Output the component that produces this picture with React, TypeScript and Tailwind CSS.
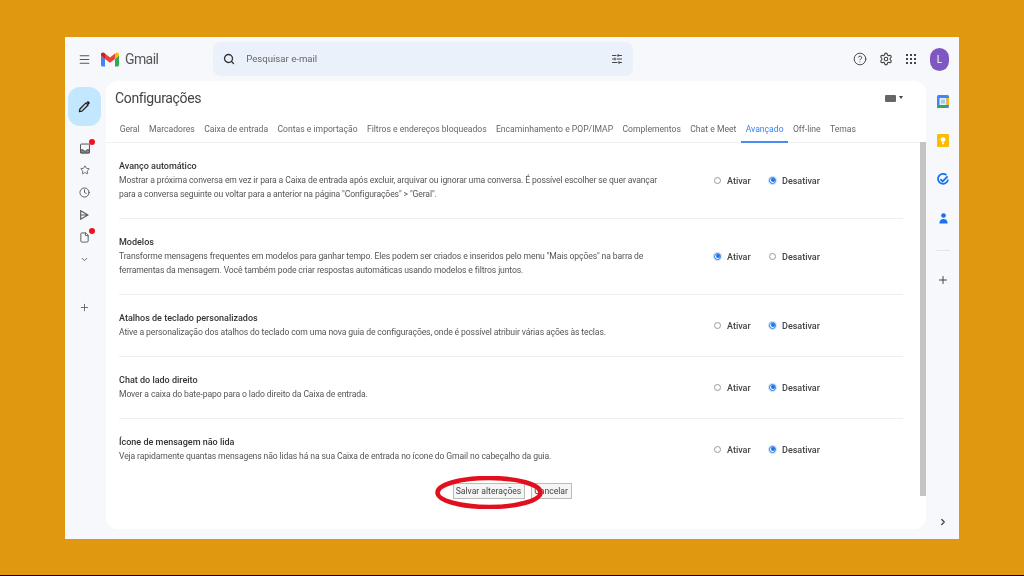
import { ChevronDown, ChevronRight, CircleHelp, Clock, File, Menu, Plus, Search, Settings, SlidersHorizontal, Star } from 'lucide-react';

const tabs = ['Geral', 'Marcadores', 'Caixa de entrada', 'Contas e importação', 'Filtros e endereços bloqueados', 'Encaminhamento e POP/IMAP', 'Complementos', 'Chat e Meet', 'Avançado', 'Off-line', 'Temas'];

const rows = [
    {
        title: 'Avanço automático',
        lines: ['Mostrar a próxima conversa em vez ir para a Caixa de entrada após excluir, arquivar ou ignorar uma conversa. É possível escolher se quer avançar', 'para a conversa seguinte ou voltar para a anterior na página "Configurações" > "Geral".'],
        on: false
    },
    {
        title: 'Modelos',
        lines: ['Transforme mensagens frequentes em modelos para ganhar tempo. Eles podem ser criados e inseridos pelo menu "Mais opções" na barra de', 'ferramentas da mensagem. Você também pode criar respostas automáticas usando modelos e filtros juntos.'],
        on: true
    },
    {
        title: 'Atalhos de teclado personalizados',
        lines: ['Ative a personalização dos atalhos do teclado com uma nova guia de configurações, onde é possível atribuir várias ações às teclas.'],
        on: false
    },
    {
        title: 'Chat do lado direito',
        lines: ['Mover a caixa do bate-papo para o lado direito da Caixa de entrada.'],
        on: false
    },
    {
        title: 'Ícone de mensagem não lida',
        lines: ['Veja rapidamente quantas mensagens não lidas há na sua Caixa de entrada no ícone do Gmail no cabeçalho da guia.'],
        on: false
    }
];

function Radio({ checked, label, width }: { checked: boolean; label: string; width: string }) {
    return (
        <div className={`flex items-center ${width}`}>
            {checked ? (
                <span className="flex h-[7px] w-[7px] items-center justify-center rounded-full border border-[#1a73e8] ring-1 ring-[#cfe0fa]">
                    <span className="h-[4px] w-[4px] rounded-full bg-[#1a73e8]" />
                </span>
            ) : (
                <span className="h-[7px] w-[7px] rounded-full border border-[#999]" />
            )}
            <span className="ml-[6px] mt-[2px] text-[9px] font-medium leading-[13px] text-[#444]">{label}</span>
        </div>
    );
}

function GmailLogo() {
    return (
        <svg width="18" height="15" viewBox="0 0 18 14">
            <path d="M0 3v9.5C0 13.3.7 14 1.5 14H4V6.5z" fill="#4285f4" />
            <path d="M14 14h2.5c.8 0 1.5-.7 1.5-1.5V3l-4 3.5z" fill="#34a853" />
            <path d="M14 1v5.5L18 3V1.8C18 .3 16.2-.6 15 .3z" fill="#fbbc04" />
            <path d="M4 6.5V1l5 4 5-4v5.5L9 10.3z" fill="#ea4335" />
            <path d="M0 1.8V3l4 3.5V1L3 .3C1.8-.6 0 .3 0 1.8z" fill="#c5221f" />
        </svg>
    );
}

function SideIcons() {
    return (
        <div className="flex w-[33px] flex-col items-center text-[#555]">
            <div className="relative mt-[11px] flex h-[22px] items-center">
                <svg width="10" height="11" viewBox="0 0 11 11" fill="none" stroke="#555" strokeWidth="1.1">
                    <rect x="0.6" y="0.6" width="9.8" height="9.8" rx="1" />
                    <path d="M0.6 7h3c0 2 3.8 2 3.8 0h3v3.4h-9.8z" fill="#888" />
                </svg>
                <span className="absolute right-[-5px] top-[2px] h-[6px] w-[6px] rounded-full bg-[#f01020]" />
            </div>
            <div className="flex h-[22px] items-center"><Star size={10} strokeWidth={2} /></div>
            <div className="flex h-[22px] items-center"><Clock size={11} strokeWidth={2} /></div>
            <div className="flex h-[23px] items-center">
                <svg width="9" height="10" viewBox="0 0 9 10" fill="none" stroke="#555" strokeWidth="1.1">
                    <path d="M0.7 0.8L8 5 0.7 9.2zM0.7 5H8" />
                </svg>
            </div>
            <div className="relative flex h-[22px] items-center">
                <File size={11} strokeWidth={2} />
                <span className="absolute right-[-5px] top-[2px] h-[6px] w-[6px] rounded-full bg-[#f01020]" />
            </div>
            <div className="flex h-[22px] items-center"><ChevronDown size={9} strokeWidth={2.4} /></div>
            <div className="mt-[26px] flex h-[22px] items-center"><Plus size={11} strokeWidth={1.8} /></div>
        </div>
    );
}

function RightRail() {
    return (
        <div className="flex w-[33px] flex-col items-center pl-[1px]">
            <svg className="mt-[14px]" width="12" height="13" viewBox="0 0 12 13">
                <rect width="12" height="13" rx="1.5" fill="#4285f4" />
                <rect x="2.5" y="3" width="7" height="7" fill="#e8f0fe" />
                <rect x="9.5" y="3" width="2.5" height="7" fill="#fbbc04" />
                <rect x="0" y="10" width="9.5" height="3" fill="#34a853" />
                <rect x="4" y="4.5" width="4" height="4" fill="#a8c7fa" />
            </svg>
            <svg className="mt-[26px]" width="12" height="13" viewBox="0 0 12 13">
                <rect width="12" height="13" rx="1" fill="#fbbc04" />
                <circle cx="6" cy="5.6" r="2.4" fill="#fff" />
                <rect x="5" y="8.4" width="2" height="1.8" fill="#fff" />
            </svg>
            <svg className="mt-[26px]" width="12" height="13" viewBox="0 0 12 13" fill="none">
                <path d="M9.5 2.2A5 5 0 1 0 11 6.5" stroke="#1a73e8" strokeWidth="1.8" />
                <path d="M3.4 6.2l2.2 2.2 5-5" stroke="#1a73e8" strokeWidth="1.8" />
            </svg>
            <svg className="mt-[26px]" width="9" height="13" viewBox="0 0 10 13">
                <circle cx="5" cy="3.2" r="2.6" fill="#1a73e8" />
                <path d="M0.4 12c0-3.6 2-5 4.6-5s4.6 1.4 4.6 5z" fill="#1a73e8" />
            </svg>
            <div className="mt-[25px] h-px w-[14px] bg-[#e3e5ea]" />
            <Plus className="mt-[23px]" size={12} strokeWidth={2} color="#444" />
            <div className="flex-1" />
            <ChevronRight className="mb-[12px]" size={10} strokeWidth={3} color="#444" />
        </div>
    );
}

export default function App() {
    return (
        <div className="flex h-[576px] w-[1024px] flex-col overflow-hidden bg-[#e09810] font-['Roboto',sans-serif]">
            <div className="min-h-0 flex-1 px-[65px] pb-[36px] pt-[37px]">
                <div className="flex h-full flex-col bg-[#f6f8fc] blur-[0.35px]">
                    <header className="flex h-[44px] items-center">
                        <Menu className="ml-[13px] text-[#555]" size={13} strokeWidth={2} />
                        <div className="ml-[10px]"><GmailLogo /></div>
                        <span className="ml-[6px] text-[14px] tracking-[-0.6px] text-[#555]">Gmail</span>
                        <div className="ml-[55px] flex h-[34px] w-[420px] items-center rounded-[8px] bg-[#eaf1fb] pl-[10px] pr-[10px]">
                            <Search size={12} strokeWidth={2.6} color="#333" />
                            <span className="ml-[11px] flex-1 text-[9.6px] text-[#666]">Pesquisar e-mail</span>
                            <SlidersHorizontal size={12} strokeWidth={2} color="#444" />
                        </div>
                        <div className="flex-1" />
                        <CircleHelp size={14} strokeWidth={1.6} color="#444" />
                        <Settings className="ml-[12px]" size={14} strokeWidth={1.9} color="#444" />
                        <div className="ml-[13px] grid grid-cols-3 gap-[2px]">
                            {[0, 1, 2, 3, 4, 5, 6, 7, 8].map((i) => (
                                <span key={i} className="h-[2px] w-[2px] bg-[#444]" />
                            ))}
                        </div>
                        <div className="ml-[14px] mr-[10px] flex h-[23px] w-[19px] items-center justify-center rounded-full bg-[#7e57c2] text-[10px] text-white">L</div>
                    </header>

                    <div className="flex min-h-0 flex-1">
                        <div className="w-[41px] pl-[3px] pt-[6px]">
                            <div className="flex h-[39px] w-[33px] items-center justify-center rounded-[12px] bg-[#c2e7ff]">
                                <svg width="13" height="13" viewBox="0 0 13 13" fill="none">
                                    <path d="M1.4 11.6l.5-2.6L8 2.9l2.1 2.1L4 11.1z" stroke="#222" strokeWidth="1.3" strokeLinejoin="round" />
                                    <path d="M8.6 2.3l.7-.7a1 1 0 0 1 1.4 0l.7.7a1 1 0 0 1 0 1.4l-.7.7z" fill="#111" />
                                </svg>
                            </div>
                            <SideIcons />
                        </div>

                        <main className="mb-[10px] flex w-[820px] flex-col rounded-[12px] bg-white">
                            <div className="flex h-[35px] items-start justify-between pl-[9px] pr-[23px] pt-[6px]">
                                <span className="text-[14px] leading-[22px] tracking-[-0.35px] text-[#444]">Configurações</span>
                                <div className="mt-[8px] flex items-center gap-[3px]">
                                    <span className="h-[7px] w-[11px] rounded-[1px] bg-[#666]" />
                                    <span className="mb-[3px] h-0 w-0 border-x-[2.5px] border-t-[3px] border-x-transparent border-t-[#444]" />
                                </div>
                            </div>
                            <nav className="flex h-[27px] items-stretch border-b border-[#f0f0f0] pl-[9px]">
                                {tabs.map((tab) => (
                                    <div
                                        key={tab}
                                        className={
                                            tab === 'Avançado'
                                                ? 'mb-[-1px] flex items-center border-b-2 border-[#4a8df0] px-[4.7px] pt-[2px] text-[8.6px] text-[#3b82f0]'
                                                : 'flex items-center px-[4.7px] text-[8.6px] text-[#666]'
                                        }
                                    >
                                        {tab}
                                    </div>
                                ))}
                            </nav>
                            <div className="flex min-h-0 flex-1">
                                <div className="w-[814px] pl-[13px] pr-[17px]">
                                    {rows.map((row, i) => (
                                        <div
                                            key={row.title}
                                            className={i < rows.length - 1 ? 'flex items-center border-b border-[#eeeeee] pb-[17px] pt-[16px]' : 'flex items-center pb-[17px] pt-[16px]'}
                                        >
                                            <div className="w-[595px] text-[8.6px] leading-[14px] tracking-[-0.117px] text-[#555]">
                                                <div className="text-[9px] font-medium tracking-normal text-[#333]">{row.title}</div>
                                                {row.lines.map((line) => (
                                                    <div key={line} className="whitespace-nowrap">{line}</div>
                                                ))}
                                            </div>
                                            <Radio checked={row.on} label="Ativar" width="w-[55px]" />
                                            <Radio checked={!row.on} label="Desativar" width="" />
                                        </div>
                                    ))}
                                    <div className="mt-[3px] flex justify-center gap-[6px] pl-[2px]">
                                        <div className="relative flex">
                                            <button className="h-[16px] w-[72px] border border-[#bbb] bg-[#f5f5f5] text-[8.6px] text-[#444]">Salvar alterações</button>
                                            <svg className="absolute left-[-18px] top-[-7px]" width="108" height="33" viewBox="0 0 108 33" fill="none">
                                                <ellipse cx="54" cy="16.5" rx="51.5" ry="14.5" stroke="#e2101e" strokeWidth="4.5" />
                                            </svg>
                                        </div>
                                        <button className="h-[16px] w-[41px] border border-[#bbb] bg-[#f5f5f5] text-[8.6px] text-[#444]">Cancelar</button>
                                    </div>
                                </div>
                                <div className="-mt-px h-[354px] w-[6px] bg-[#c4c4c4]" />
                            </div>
                        </main>
                        <RightRail />
                    </div>
                </div>
            </div>
            <div className="h-px bg-black" />
        </div>
    );
}
